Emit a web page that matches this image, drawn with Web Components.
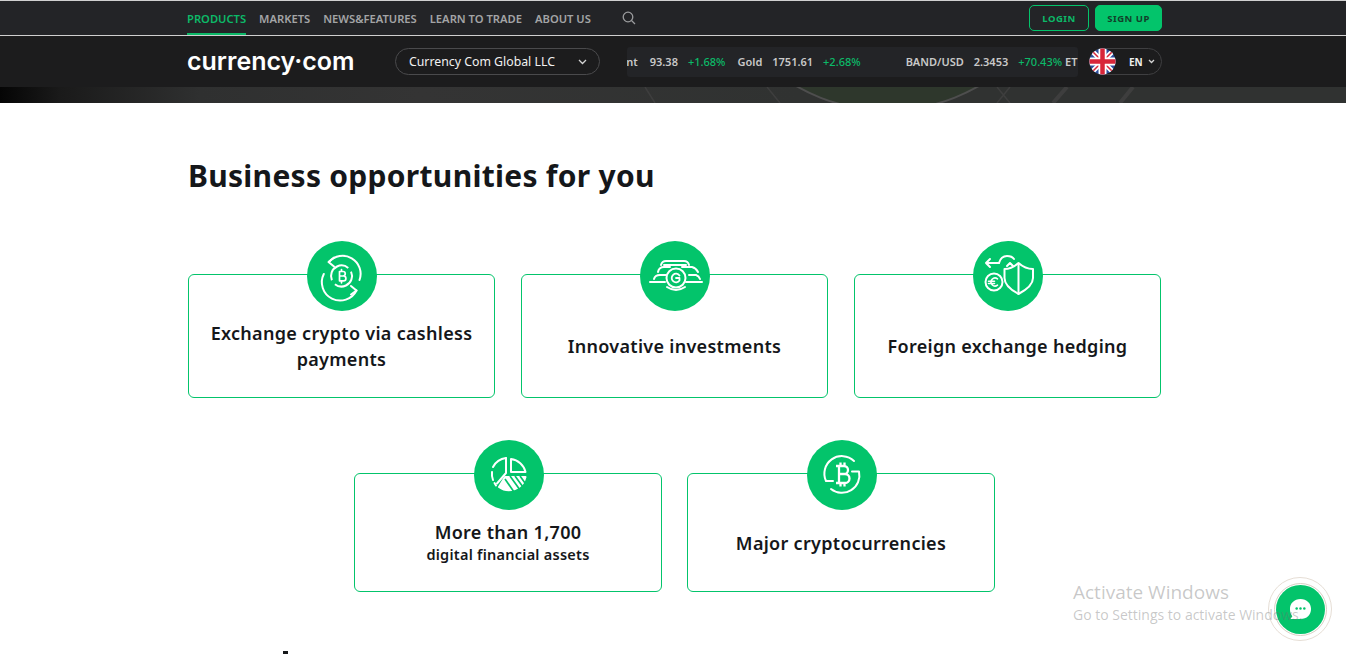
<!DOCTYPE html>
<html lang="en">
<head>
<meta charset="utf-8">
<title>Business opportunities</title>
<style>
    html,body{margin:0;padding:0;height:654px;overflow:hidden;background:#fff}
    body{font-family:"Noto Sans","Open Sans",sans-serif;color:#15171a;position:relative}
    svg.ic{width:70px;height:70px;display:block;fill:none;stroke:#fff;stroke-width:2;stroke-linecap:round;stroke-linejoin:round}
</style>
</head>
<body>
<site-header></site-header>
<hero-strip></hero-strip>
<opportunities-section>
    <feature-card>
        <svg slot="icon" class="ic" viewBox="0 0 70 70">
            <path d="M22 21A18 18 0 0 1 52.500 39"/>
            <path d="M27 16.500l-5.500 4.500 5.500 4.500"/>
            <path d="M16.800 33A18 18 0 0 0 49.500 49.500"/>
            <path d="M44 45l5.500 4.500-5.500 4"/>
            <circle cx="34.500" cy="35" r="10.500" stroke-dasharray="28 5" stroke-linecap="butt" transform="rotate(-25 34.500 35)"/>
            <path d="M32.500 30.500h3.500a2.200 2.200 0 0 1 0 4.500h-3.500zM32.500 35h4a2.300 2.300 0 0 1 0 4.800h-4zM32.500 30.500v9.300M34.500 28.500v2M34.500 39.800v2" stroke-width="1.700"/>
        </svg>
        Exchange crypto via cashless payments
    </feature-card>
    <feature-card>
        <svg slot="icon" class="ic" viewBox="0 0 70 70">
            <path d="M21 24q1-4 5-4h18q4 0 5 4"/>
            <path d="M24 24h22"/>
            <path d="M18 31q1-5 6-5h6M42 26h10q4 1 6 5"/>
            <path d="M14 38q1-4 6-4h6M49 34h7q3 1 4 4"/>
            <path d="M10 41h15M46 41h16"/>
            <circle cx="36" cy="37" r="9.500"/>
            <path d="M27 46q9 6 18 0"/>
            <path d="M39.500 34.500a4.300 4.300 0 1 0 0 5v-2.500H36" stroke-width="1.800"/>
        </svg>
        Innovative investments
    </feature-card>
    <feature-card>
        <svg slot="icon" class="ic" viewBox="0 0 70 70">
            <path d="M13 22h13M17 18l-4 4 4 4"/>
            <path d="M26 22q2-7 8-7 5 0 7 3"/>
            <path d="M34 25l3-3 3 3"/>
            <path d="M45.500 22C41 26 36 28 31.500 28V37C31.500 44 38 49 45.500 53 53 49 60 44 60 37V28C55 28 50 26 45.500 22z"/>
            <path d="M45.500 23v29"/>
            <circle cx="21" cy="41" r="8.500"/>
            <path d="M24.500 37.800a4 4 0 1 0 0 6.400M15.500 40.200h6M15.500 42.500h6" stroke-width="1.600"/>
        </svg>
        Foreign exchange hedging
    </feature-card>
    <feature-card>
        <svg slot="icon" class="ic" viewBox="0 0 70 70">
            <path d="M32 18A17 17 0 0 0 19 27M18 32a17 17 0 0 0 1 8M20.500 43l1.500 2.500"/>
            <path d="M32 18V33L23 43.500"/>
            <path d="M37 19A17 17 0 0 1 51.500 32H37z"/>
            <path d="M31 37H51.500A17 17 0 0 1 25 47z" fill="#fff"/>
            <path d="M31 39l9 13M36 36l10 14M41 36l8 11M46 36l5 7" stroke="#03c46b" stroke-width="1.700" stroke-linecap="butt"/>
        </svg>
        <span>More than 1,700<small>digital financial assets</small></span>
    </feature-card>
    <feature-card>
        <svg slot="icon" class="ic" viewBox="0 0 70 70">
            <path d="M26 41H19A17.500 17.500 0 0 1 47 21"/>
            <path d="M45 31.500H52A17.500 17.500 0 0 1 24 49"/>
            <path d="M32 26h5a3.800 3.800 0 0 1 0 8h-5zM32 34h6a4.200 4.200 0 0 1 0 9h-6zM29 26h3M29 43h3M32 26v17M33.500 22.500V26M37.500 22.500V26M33.500 43v3.500M37.500 43v3.500" stroke-width="2.300" stroke-linecap="butt"/>
        </svg>
        Major cryptocurrencies
    </feature-card>
</opportunities-section>
<page-next></page-next>
<chat-button></chat-button>
<windows-mark></windows-mark>

<script>
const GREEN = '#03c46b'

class TopNav extends HTMLElement{
    constructor(){
        super()
        this.attachShadow({mode: 'open'}).innerHTML = `
            <style>
                :host{display:block;background:#232427;border-top:1px solid #d0d0d0;border-bottom:1px solid #cfcfcf;height:34px}
                .in{width:975px;margin-left:187px;height:34px;display:flex;align-items:center}
                a{display:flex;align-items:center;height:34px;box-sizing:border-box;padding-top:3px;margin-right:13px;font-size:11.200px;font-weight:600;color:#a3a4a6;white-space:nowrap;border-bottom:2px solid transparent}
                a.on{color:#0cb968;border-bottom-color:#0cb968}
                svg{width:14px;height:14px;margin-left:18px;margin-top:-1px;fill:none;stroke:#9b9c9e;stroke-width:1.300}
                .end{margin-left:auto;display:flex;gap:6px}
                button{font:700 9.500px "Noto Sans",sans-serif;letter-spacing:.5px;height:26px;border-radius:5px;border:1px solid ${GREEN};cursor:pointer;padding:0}
                .login{width:60px;background:transparent;color:#0cb968}
                .sign{width:67px;background:${GREEN};color:#12402a}
            </style>
            <div class="in">
                <a class="on">PRODUCTS</a><a>MARKETS</a><a>NEWS&amp;FEATURES</a><a>LEARN TO TRADE</a><a>ABOUT US</a>
                <svg viewBox="0 0 14 14"><circle cx="6" cy="6" r="4.800"/><path d="M9.500 9.500l3.500 3.500"/></svg>
                <div class="end"><button class="login">LOGIN</button><button class="sign">SIGN UP</button></div>
            </div>
        `
    }
}
customElements.define('top-nav', TopNav)

class MarketTicker extends HTMLElement{
    constructor(){
        super()
        this.attachShadow({mode: 'open'}).innerHTML = `
            <style>
                :host{display:block;width:451px;height:30px;background:#232427;border-radius:3px;overflow:hidden;font-size:11px;font-weight:600;color:#c9c9c9}
                .row{display:flex;align-items:center;height:30px;margin-left:-19px;white-space:nowrap}
                span{margin-right:10px}
                .first{margin-right:12px}
                .up{color:#0cb968;font-weight:500;margin-right:12px}
                .gap{margin-left:33px}
                .tight{margin-right:3px}
            </style>
            <div class="row">
                <span class="first">Brent</span><span>93.38</span><span class="up">+1.68%</span>
                <span>Gold</span><span>1751.61</span><span class="up">+2.68%</span>
                <span class="gap">BAND/USD</span><span>2.3453</span><span class="up tight">+70.43%</span>
                <span>ETH/USD</span>
            </div>
        `
    }
}
customElements.define('market-ticker', MarketTicker)

class MainBar extends HTMLElement{
    constructor(){
        super()
        this.attachShadow({mode: 'open'}).innerHTML = `
            <style>
                :host{display:block;background:#1c1c1d;height:51px}
                .in{width:975px;margin-left:187px;height:51px;display:flex;align-items:center}
                .logo{font:600 25px "Inter",sans-serif;color:#fff;width:208px;white-space:nowrap;position:relative;top:-1px}
                .entity{width:205px;height:27px;box-sizing:border-box;border:1px solid #4a4a4c;border-radius:14px;display:flex;align-items:center;padding:0 12px 0 13px;justify-content:space-between;color:#f1f1f1;font-size:12.300px;margin-right:27px}
                .entity svg,.lang svg{fill:none;stroke:#d4d4d4;stroke-width:1.300}
                market-ticker{flex:none}
                .lang{margin-left:11px;width:73px;height:27px;box-sizing:border-box;border:1px solid #3f3f41;border-radius:14px;display:flex;align-items:center;color:#eee;font-size:10px;font-weight:700}
                .flag{width:27px;height:27px;margin-left:-1px;margin-right:13px;flex:none}
                .lang .ch{width:7px;height:5px;margin-left:5px}
            </style>
            <div class="in">
                <div class="logo">currency·com</div>
                <div class="entity">Currency Com Global LLC
                    <svg width="9" height="6" viewBox="0 0 9 6"><path d="M1 1l3.500 3.500L8 1"/></svg>
                </div>
                <market-ticker></market-ticker>
                <div class="lang">
                    <svg class="flag" viewBox="0 0 27 27" style="stroke:none">
                        <clipPath id="c"><circle cx="13.500" cy="13.500" r="13"/></clipPath>
                        <g clip-path="url(#c)">
                            <rect width="27" height="27" fill="#2b4f9e"/>
                            <path d="M0 0l27 27M27 0L0 27" stroke="#fff" stroke-width="5"/>
                            <path d="M0 0l27 27M27 0L0 27" stroke="#d8263a" stroke-width="1.500"/>
                            <path d="M13.500 0v27M0 13.500h27" stroke="#fff" stroke-width="8"/>
                            <path d="M13.500 0v27M0 13.500h27" stroke="#d8263a" stroke-width="4.500"/>
                        </g>
                    </svg>
                    EN
                    <svg class="ch" viewBox="0 0 7 5"><path d="M1 1l2.500 2.500L6 1"/></svg>
                </div>
            </div>
        `
    }
}
customElements.define('main-bar', MainBar)

class SiteHeader extends HTMLElement{
    constructor(){
        super()
        this.attachShadow({mode: 'open'}).innerHTML = `
            <style>:host{display:block}</style>
            <top-nav></top-nav>
            <main-bar></main-bar>
        `
    }
}
customElements.define('site-header', SiteHeader)

class HeroStrip extends HTMLElement{
    constructor(){
        super()
        this.attachShadow({mode: 'open'}).innerHTML = `
            <style>
                :host{display:block;height:16px;overflow:hidden;background:linear-gradient(90deg,#050505 0,#1a1a1a 60px,#2f3030 200px,#343434 420px,#303231 800px,#303231 1346px)}
                svg{display:block}
            </style>
            <svg width="1346" height="16" viewBox="0 87 1346 16">
                <circle cx="887.500" cy="-72.400" r="182.800" fill="#2e372c" stroke="#4e4e4e" stroke-width="2"/>
                <path d="M645 87l10 16M767 87l13 16M997 103l13-16M997 87l13 16" stroke="#3e3e3e" stroke-width="1.500" fill="none"/>
                <path d="M1067 87l-14 16M1133 87l-13 16" stroke="#3e3e3e" stroke-width="4" fill="none"/>
            </svg>
        `
    }
}
customElements.define('hero-strip', HeroStrip)

class FeatureCard extends HTMLElement{
    constructor(){
        super()
        this.attachShadow({mode: 'open'}).innerHTML = `
            <style>
                :host{display:flex;flex-direction:column;align-items:center;box-sizing:border-box;border:1px solid ${GREEN};border-radius:6px;padding:0 16px;font-size:18px;font-weight:600;line-height:26px;letter-spacing:.3px;text-align:center;color:#15171a}
                .badge{width:70px;height:70px;border-radius:50%;background:${GREEN};margin-top:-34px;flex:none;position:relative;left:.5px}
                .body{flex:1;display:flex;align-items:center;justify-content:center;margin-top:-35px;padding-top:19px}
                ::slotted(span){display:block;margin-top:-2px}
            </style>
            <div class="badge"><slot name="icon"></slot></div>
            <div class="body"><div><slot></slot></div></div>
        `
    }
}
customElements.define('feature-card', FeatureCard)

class OpportunitiesSection extends HTMLElement{
    constructor(){
        super()
        this.attachShadow({mode: 'open'}).innerHTML = `
            <style>
                :host{display:block;width:973px;margin-left:188px}
                h2{margin:0;padding-top:52px;font-size:30px;line-height:42px;font-weight:700;color:#15171a;letter-spacing:.28px}
                .row{display:grid;grid-template-columns:repeat(3,307px);gap:26px}
                .one{margin-top:77px;grid-auto-rows:124px}
                .two{margin-top:75px;grid-template-columns:308px 308px;gap:25px;justify-content:center;grid-auto-rows:119px}
            </style>
            <h2>Business opportunities for you</h2>
            <div class="row one"><slot name="a"></slot></div>
            <div class="row two"><slot name="b"></slot></div>
        `
    }
    connectedCallback(){
        const cards = this.querySelectorAll('feature-card')
        cards.forEach((card, i) => card.slot = i < 3 ? 'a' : 'b')
        const small = this.querySelector('small')
        if(small){
            small.style.cssText = 'display:block;font-size:14.500px;line-height:19px;font-weight:600;letter-spacing:.25px'
        }
    }
}
customElements.define('opportunities-section', OpportunitiesSection)

// tip of the next section's heading, the rest of it is below the fold
class PageNext extends HTMLElement{
    constructor(){
        super()
        this.attachShadow({mode: 'open'}).innerHTML = `
            <style>
                :host{position:absolute;left:283px;top:651px;width:5px;height:3px;background:#15171a}
            </style>
        `
    }
}
customElements.define('page-next', PageNext)

class WindowsMark extends HTMLElement{
    constructor(){
        super()
        this.attachShadow({mode: 'open'}).innerHTML = `
            <style>
                :host{position:absolute;left:1073px;top:581px;font-family:"Open Sans",sans-serif;color:rgba(110,110,110,.38);white-space:nowrap;pointer-events:none}
                div{font-size:19px;line-height:23px}
                p{margin:0;font-size:14px;line-height:22px}
            </style>
            <div>Activate Windows</div>
            <p>Go to Settings to activate Windows.</p>
        `
    }
}
customElements.define('windows-mark', WindowsMark)

class ChatButton extends HTMLElement{
    constructor(){
        super()
        this.attachShadow({mode: 'open'}).innerHTML = `
            <style>
                :host{position:absolute;left:1268px;top:577px;width:64px;height:64px;border-radius:50%;border:1px solid #e6ded5;box-sizing:border-box;display:flex;align-items:center;justify-content:center}
                .ring{width:53px;height:53px;box-sizing:border-box;border:1px solid #d8cfc3;border-radius:50%;display:flex;align-items:center;justify-content:center}
                .b{width:49px;height:49px;border-radius:50%;background:${GREEN};display:flex;align-items:center;justify-content:center}
            </style>
            <div class="ring"><div class="b">
                <svg width="23" height="23" viewBox="0 0 24 24">
                    <path d="M12 1c6.500 0 11 4.500 11 10.500S18.500 22 12 22H1.500l2-3C1.800 17 1 14.500 1 11.500 1 5.500 5.500 1 12 1z" fill="#fff"/>
                    <circle cx="8" cy="11" r="1.300" fill="${GREEN}"/><circle cx="12" cy="11" r="1.300" fill="${GREEN}"/><circle cx="16" cy="11" r="1.300" fill="${GREEN}"/>
                </svg>
            </div></div>
        `
    }
}
customElements.define('chat-button', ChatButton)
</script>
</body>
</html>
